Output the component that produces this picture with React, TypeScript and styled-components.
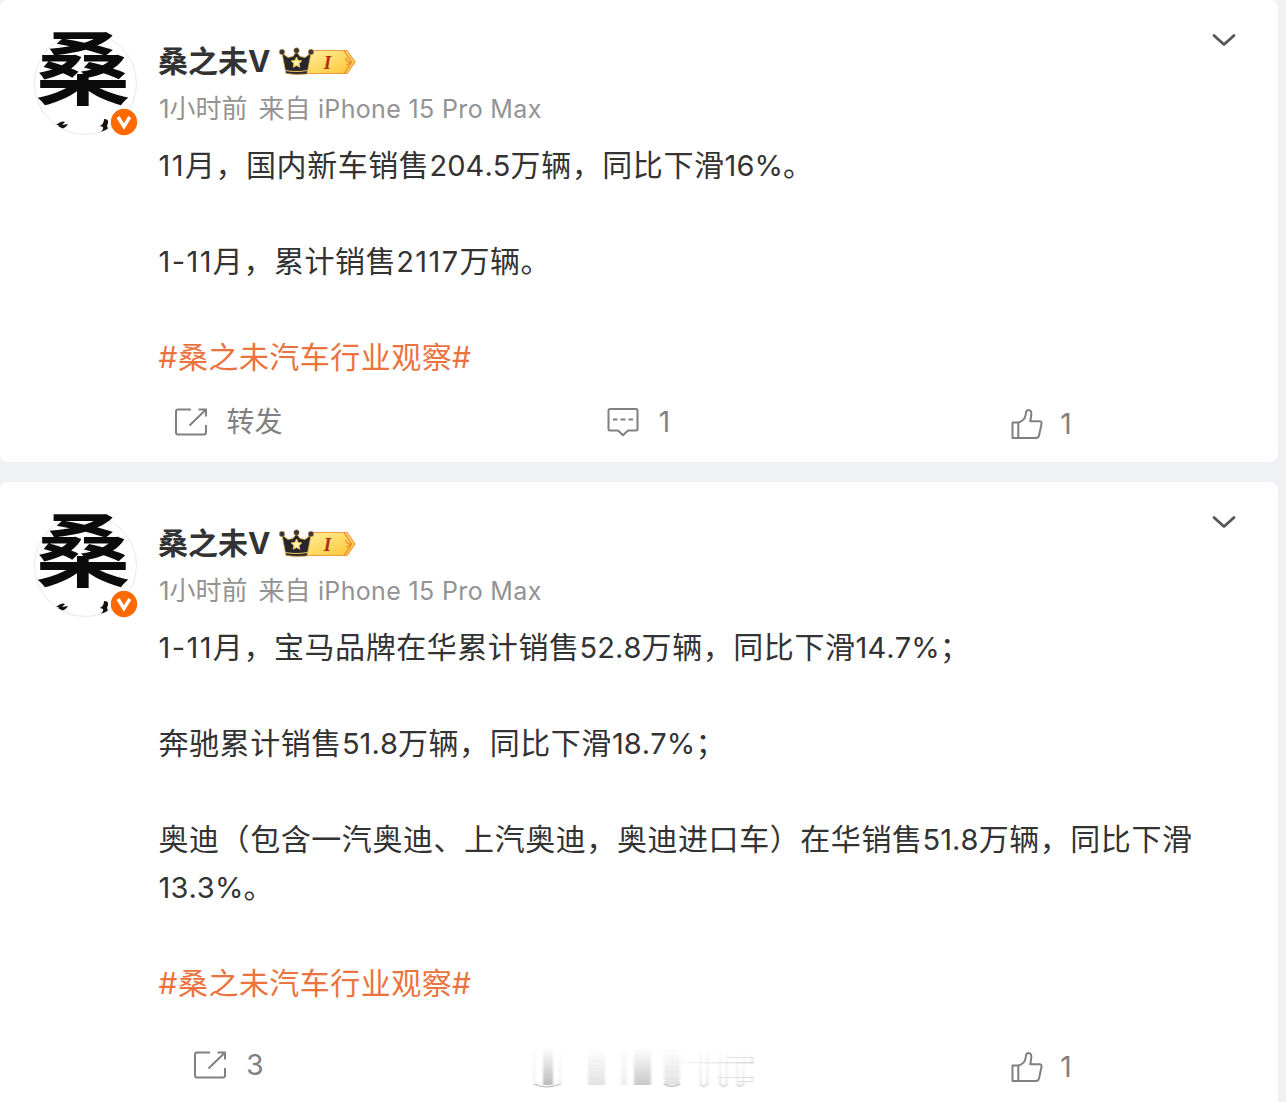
import styled, { createGlobalStyle } from 'styled-components';

const GlobalStyle = createGlobalStyle`
    * {
        box-sizing: border-box;
    }
    body {
        margin: 0;
        height: 1102px;
        overflow: hidden;
        background: #f0f1f5;
        font-family: Inter, "Noto Sans CJK SC", sans-serif;
    }
`;

const Feed = styled.main`
    display: flex;
    flex-direction: column;
    gap: 20px;
    width: 1278px;
`;

const Card = styled.article<{ $height: number }>`
    height: ${props => props.$height}px;
    padding: 32px 40px 0 34px;
    background: #fff;
    border-radius: 8px;
`;

const Header = styled.header`
    display: flex;
    height: 109px;
`;

const Avatar = styled.div`
    position: relative;
    flex: none;
    width: 104px;
    height: 104px;
    margin-right: 20px;
`;

const Portrait = styled.div`
    width: 103px;
    height: 103px;
    overflow: hidden;
    border: 1px solid #e8e8e8;
    border-radius: 50%;
`;

const Brush = styled.span`
    position: absolute;
    left: 1px;
    top: -31px;
    font-size: 94px;
    line-height: 136px;
    font-weight: 700;
    color: #0b0b0b;
    transform: scale(1.02, 0.85);
    transform-origin: 0 50%;
`;

const Verified = styled.svg`
    position: absolute;
    left: 76px;
    top: 76px;
`;

const Author = styled.div`
    flex: 1;
`;

const NameRow = styled.div`
    display: flex;
    align-items: center;
    height: 60px;
`;

const Name = styled.span`
    margin: -2px 9px 0 0;
    font-size: 30px;
    line-height: 40px;
    font-weight: 700;
    color: #333;
`;

const Meta = styled.div`
    display: flex;
    gap: 11px;
    height: 34px;
    padding-left: 1px;
    font-size: 26px;
    line-height: 34px;
    color: #939393;
`;

const Device = styled.span`
    font-size: 25px;
    letter-spacing: 0.35px;
`;

const Chevron = styled.svg`
    margin-right: 1px;
`;

const Body = styled.div`
    padding-left: 124.5px;
    font-size: 30px;
    line-height: 48px;
    letter-spacing: 0.56px;
    color: #333;
    white-space: nowrap;
`;

const Line = styled.p`
    margin: 0;
    height: 48px;
`;

const Latin = styled.span<{ $loose: boolean }>`
    font-size: 29px;
    font-kerning: none;
    letter-spacing: ${props => (props.$loose ? 1.4 : 0.1)}px;
`;

const Topic = styled.a`
    letter-spacing: 0.46px;
    color: #eb7340;
`;

const Actions = styled.footer<{ $gap: number }>`
    display: grid;
    grid-template-columns: 410px 409px 397px;
    margin: ${props => props.$gap}px 0 0 -10px;
    height: 48px;
`;

const Action = styled.div<{ $drop?: number; $gap?: number }>`
    display: flex;
    align-items: center;
    justify-content: center;
    gap: ${props => props.$gap || 20}px;
    padding-top: ${props => props.$drop || 0}px;
    font-size: 28px;
    line-height: 40px;
    color: #808080;
`;

const Smudge = styled.svg`
    margin: 10px 0 0 83px;
`;

// digits sit a little smaller than the han glyphs, runs of ones need more air
const Mixed = ({ text }: { text: string }) => (
    <>
        {text.split(/([0-9.%-]+)/).map((part, i) => (
            i % 2 ? <Latin key={i} $loose={part.includes('11')}>{part}</Latin> : part
        ))}
    </>
);

const LevelBadge = ({ id }: { id: string }) => (
    <svg width="78" height="30" viewBox="0 0 78 30">
        <defs>
            <linearGradient id={id} x1="0" y1="0" x2="1" y2="1">
                <stop offset="0" stopColor="#fff0a0" />
                <stop offset="1" stopColor="#ffc52e" />
            </linearGradient>
        </defs>
        <path d="M31 3.5H68L76 15l-8 11.5H24z" fill={`url(#${id})`} stroke="#f09a45" strokeWidth="1.2" />
        <path d="M65 3.5l7.5 11.5L65 26.5M66.500 11l1.500 3 4 1.500-4.500 2.500" fill="none" stroke="#ee8732" strokeWidth="1.2" />
        <path d="M3 6l6 4.500 5-1 3.500-5 3.500 5 5 1 6-4.500-4 21Q17 28 7 26.500z" fill="#27262d" stroke="#d7a63d" strokeWidth="0.8" />
        <path d="M6.500 23.500Q17 25.500 28.500 23.500" fill="none" stroke="#f2c95d" strokeWidth="1.2" />
        <circle cx="3" cy="5" r="2.700" fill="#39343a" stroke="#bb9040" strokeWidth="0.6" />
        <circle cx="17.500" cy="3.500" r="2.700" fill="#39343a" stroke="#bb9040" strokeWidth="0.6" />
        <circle cx="32" cy="5" r="2.700" fill="#39343a" stroke="#bb9040" strokeWidth="0.6" />
        <path d="M17.500 10l1.600 3.400 3.700.5-2.700 2.600.7 3.800-3.300-1.800-3.300 1.800.7-3.800-2.700-2.600 3.700-.5z" fill="#fff1a8" stroke="#ffcb43" strokeWidth="0.8" />
        <text x="48.500" y="21.500" textAnchor="middle" fontFamily="Liberation Serif, serif" fontSize="19" fontWeight="700" fontStyle="italic" fill="#b52a12">I</text>
    </svg>
);

const ShareIcon = () => (
    <svg width="32" height="28" viewBox="0 0 32 28" fill="none" stroke="#808080" strokeWidth="2">
        <path d="M16 1.500H3Q1 1.500 1 3.500V24.500Q1 26.500 3 26.500H29Q31 26.500 31 24.500V17M14.500 17.500L30 2.500M23.500 1.500H31V8.500" />
    </svg>
);

const CommentIcon = () => (
    <svg width="32" height="30" viewBox="0 0 32 30" fill="none" stroke="#808080" strokeWidth="2" strokeLinejoin="round">
        <path d="M3 2H29Q30.500 2 30.500 3.500V22Q30.500 23.500 29 23.500H21L16 28.300 11 23.500H3Q1.500 23.500 1.500 22V3.500Q1.500 2 3 2z" />
        <path d="M6 12.500h4.500M13.500 12.500h5M21.500 12.500h4.500" />
    </svg>
);

const LikeIcon = () => (
    <svg width="32" height="32" viewBox="0 0 32 32" fill="none" stroke="#808080" strokeWidth="2" strokeLinejoin="round">
        <path d="M1.500 14.500H7.500C11 13.500 14.200 10.500 14.700 6.500C14.900 3.500 15.800 2 17.500 2C19.500 2 20.500 3.500 20.300 6.500L19.300 13.300H28.500Q31 13.500 30.500 16L28 27.500Q27.300 30 25 30H1.500zM7.300 14.500V30" />
    </svg>
);

const PostHeader = ({ id }: { id: string }) => (
    <Header>
        <Avatar>
            <Portrait>
                <svg width="101" height="101" viewBox="0 0 101 101">
                    <path d="M21 92q6-5 9-3l-3 3 6-1q-2 4-7 5l-5-1 3-3z" fill="#111" />
                    <path d="M69 86q5 0 4 4l-1 3q3 4-5 8l-3-1q5-3 4-6l-3-1q4-2 4-7z" fill="#111" />
                </svg>
            </Portrait>
            <Brush>桑</Brush>
            <Verified width="28" height="28" viewBox="0 0 28 28">
                <circle cx="14" cy="14" r="13.200" fill="#ff6a00" />
                <path d="M8 9L13.900 18.500 19.800 9" fill="none" stroke="#fff" strokeWidth="3.400" />
            </Verified>
        </Avatar>
        <Author>
            <NameRow>
                <Name>桑之未V</Name>
                <LevelBadge id={id} />
            </NameRow>
            <Meta>
                <span>1小时前</span>
                <span>来自 <Device>iPhone 15 Pro Max</Device></span>
            </Meta>
        </Author>
        <Chevron width="26" height="16" viewBox="0 0 26 16">
            <path d="M3 3.500L13 12.500 23 3.500" fill="none" stroke="#555" strokeWidth="2.800" strokeLinecap="round" strokeLinejoin="round" />
        </Chevron>
    </Header>
);

// faded vertical streaks over the comment slot
const streaks = [
    { x: 17, w: 1, o: 0.2 },
    { x: 26, w: 10, o: 0.4 },
    { x: 43, w: 1, o: 0.2 },
    { x: 71, w: 17, o: 0.17 },
    { x: 104, w: 6, o: 0.1 },
    { x: 117, w: 17, o: 0.32 },
    { x: 147, w: 16, o: 0.17 },
    { x: 183, w: 1, o: 0.28 },
    { x: 190, w: 1, o: 0.28 },
    { x: 203, w: 1, o: 0.28 },
    { x: 209, w: 1, o: 0.28 },
    { x: 220, w: 1, o: 0.24 },
    { x: 226, w: 1, o: 0.24 },
];

const Streaks = () => (
    <Smudge width="240" height="44" viewBox="0 0 240 44">
        <defs>
            <linearGradient id="fade" x1="0" y1="0" x2="0" y2="1">
                <stop offset="0" stopColor="#555" stopOpacity="0" />
                <stop offset="1" stopColor="#555" />
            </linearGradient>
            <linearGradient id="fadeSide">
                <stop offset="0" stopColor="#555" stopOpacity="0" />
                <stop offset="1" stopColor="#555" stopOpacity="0.2" />
            </linearGradient>
            <filter id="soft">
                <feGaussianBlur stdDeviation="1 0.6" />
            </filter>
        </defs>
        <g filter="url(#soft)">
            {streaks.map(s => (
                <rect key={s.x} x={s.x} y="0" width={s.w} height="37" fill="url(#fade)" opacity={s.o} />
            ))}
            <path d="M17 36Q30 42 43 36M147 36Q155 41 163 36M183 36l3.500 3 3.500-3M203 36l3.500 3 3.500-3M220 36l3 3 3-3" fill="none" stroke="#777" strokeOpacity="0.6" />
            <path d="M150 14H236v1.500H150zM210 9H236v1H210zM200 29H236v1H200zM220 33H236v1H220z" fill="url(#fadeSide)" />
            <path d="M235.500 9v7M235.500 28v6" stroke="#777" strokeOpacity="0.3" />
        </g>
    </Smudge>
);

const App = () => {
    return (
        <>
            <GlobalStyle />
            <Feed>
                <Card $height={462}>
                    <PostHeader id="gold1" />
                    <Body>
                        <Line><Mixed text="11月，国内新车销售204.5万辆，同比下滑16%。" /></Line>
                        <Line />
                        <Line><Mixed text="1-11月，累计销售2117万辆。" /></Line>
                        <Line />
                        <Line><Topic>#桑之未汽车行业观察#</Topic></Line>
                    </Body>
                    <Actions $gap={17}>
                        <Action $gap={19}><ShareIcon />转发</Action>
                        <Action><CommentIcon />1</Action>
                        <Action $drop={3} $gap={17}><LikeIcon />1</Action>
                    </Actions>
                </Card>
                <Card $height={640}>
                    <PostHeader id="gold2" />
                    <Body>
                        <Line><Mixed text="1-11月，宝马品牌在华累计销售52.8万辆，同比下滑14.7%；" /></Line>
                        <Line />
                        <Line><Mixed text="奔驰累计销售51.8万辆，同比下滑18.7%；" /></Line>
                        <Line />
                        <Line><Mixed text="奥迪（包含一汽奥迪、上汽奥迪，奥迪进口车）在华销售51.8万辆，同比下滑" /></Line>
                        <Line><Mixed text="13.3%。" /></Line>
                        <Line />
                        <Line><Topic>#桑之未汽车行业观察#</Topic></Line>
                    </Body>
                    <Actions $gap={31}>
                        <Action><ShareIcon />3</Action>
                        <Streaks />
                        <Action $drop={3} $gap={17}><LikeIcon />1</Action>
                    </Actions>
                </Card>
            </Feed>
        </>
    );
};

export default App;
